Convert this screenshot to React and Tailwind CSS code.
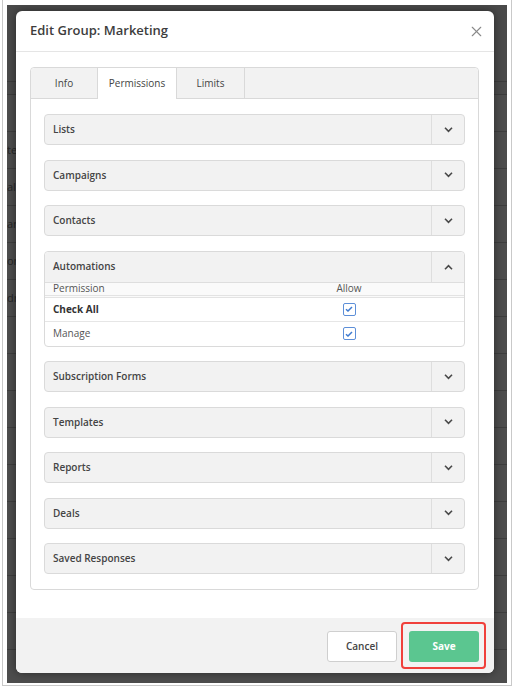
import { X } from "lucide-react";

const topSections = ["Lists", "Campaigns", "Contacts"];
const bottomSections = ["Subscription Forms", "Templates", "Reports", "Deals", "Saved Responses"];
const bgRows = ["", "te", "ale", "ar", "on", "dn", "", "", "", "", "", "", "", "", "", ""];

function Chevron({ up }) {
  return (
    <svg width="9" height="6" viewBox="0 0 9 6">
      <path
        d={up ? "M1 5.2 4.5 1.6 8 5.2" : "M1 0.8 4.5 4.4 8 0.8"}
        fill="none"
        stroke="#4a4a4a"
        strokeWidth="1.6"
      />
    </svg>
  );
}

function Checkbox() {
  return (
    <div className="flex h-[13px] w-[13px] items-center justify-center rounded-[2px] border border-[#5d8fd8] bg-white">
      <svg width="8" height="6" viewBox="0 0 8 6">
        <path d="M1 3.2 3 5 7 1" fill="none" stroke="#3f7bd0" strokeWidth="1.5" />
      </svg>
    </div>
  );
}

function SectionHeader({ label, open }) {
  return (
    <div
      className={`flex h-[31px] items-stretch bg-[#f2f2f2] ${
        open ? "rounded-t-[4px] border-b border-[#dedede]" : "rounded-[4px] border border-[#dadada]"
      }`}
    >
      <div className="flex flex-1 items-center pl-[8px] text-[10px] font-semibold text-[#444]">{label}</div>
      <div className="flex w-[33px] items-center justify-center border-l border-[#dedede]">
        <Chevron up={open} />
      </div>
    </div>
  );
}

function Automations() {
  return (
    <div className="rounded-[4px] border border-[#dadada] bg-white">
      <SectionHeader label="Automations" open />
      <div className="flex h-[15px] items-center border-b-[3px] border-double border-[#e3e3e3] bg-[#fafafa] text-[10px] text-[#555]">
        <div className="w-[254px] pl-[8px]">Permission</div>
        <div className="w-[100px] text-center">Allow</div>
      </div>
      <div className="flex h-[24px] items-center border-b border-[#e6e6e6] text-[10px] text-[#333]">
        <div className="w-[254px] pl-[8px] font-bold">Check All</div>
        <div className="flex w-[100px] justify-center">
          <Checkbox />
        </div>
      </div>
      <div className="flex h-[24px] items-center text-[10px] text-[#555]">
        <div className="w-[254px] pl-[8px]">Manage</div>
        <div className="flex w-[100px] justify-center">
          <Checkbox />
        </div>
      </div>
    </div>
  );
}

export default function App() {
  return (
    <div className="h-[688px] w-[514px] bg-white px-[2px] pb-[2px]" style={{ fontFamily: '"Open Sans", "Liberation Sans", sans-serif' }}>
      <div className="h-full w-full border-x border-b border-[#c9c9c9] px-[4px] pb-[2px] pt-[5px]">
        <div className="relative h-full w-full overflow-hidden bg-[#4a4a4a]">
          {/* dimmed page behind the modal */}
          <div className="h-[76px]" />
          <div className="h-[14px] border-y border-[#3c3c3c]" />
          {bgRows.map((t, i) => (
            <div
              key={i}
              className="flex h-[37px] items-center border-b border-[#3e3e3e] bg-[#4d4d4d] text-[11px] text-[#262626]"
            >
              {t}
            </div>
          ))}

          {/* modal */}
          <div className="absolute left-[9px] top-[6px] flex h-[662px] w-[478px] flex-col overflow-hidden rounded-[6px] bg-white shadow-[0_0_10px_rgba(0,0,0,0.45)]">
            <div className="flex h-[41px] items-center justify-between border-b border-[#e5e5e5] pl-[14px] pr-[9px]">
              <div className="text-[13px] font-semibold text-[#3d3d3d]">Edit Group: Marketing</div>
              <X size={17} strokeWidth={1.6} color="#8a8a8a" />
            </div>

            <div className="flex-1 pl-[14px] pr-[15px] pt-[15px]">
              <div className="rounded-[4px] border border-[#d9d9d9]">
                <div className="flex h-[31px] rounded-t-[4px] bg-[#f2f2f2] text-[10px] text-[#444]">
                  <div className="flex w-[67px] items-center justify-center border-b border-r border-[#d9d9d9]">Info</div>
                  <div className="flex w-[79px] items-center justify-center border-r border-[#d9d9d9] bg-white">Permissions</div>
                  <div className="flex w-[68px] items-center justify-center border-b border-r border-[#d9d9d9]">Limits</div>
                  <div className="flex-1 border-b border-[#d9d9d9]" />
                </div>
                <div className="flex flex-col gap-[14.5px] px-[13px] pb-[15px] pt-[15px]">
                  {topSections.map((s) => (
                    <SectionHeader key={s} label={s} />
                  ))}
                  <Automations />
                  {bottomSections.map((s) => (
                    <SectionHeader key={s} label={s} />
                  ))}
                </div>
              </div>
            </div>

            <div className="flex h-[55px] items-start justify-end gap-[12px] bg-[#f2f2f2] pr-[15px] pt-[13px]">
              <div className="flex h-[31px] w-[70px] items-center justify-center rounded-[3px] border border-[#cfcfcf] bg-white text-[10px] font-semibold text-[#444]">
                Cancel
              </div>
              <div className="relative flex h-[31px] w-[70px] items-center justify-center rounded-[3px] bg-[#5bc690] text-[10px] font-bold text-white">
                Save
                <div className="absolute -bottom-[7px] -left-[8px] -right-[7px] -top-[9px] rounded-[4px] border-[2.5px] border-[#f0403b]" />
              </div>
            </div>
          </div>
        </div>
      </div>
    </div>
  );
}
